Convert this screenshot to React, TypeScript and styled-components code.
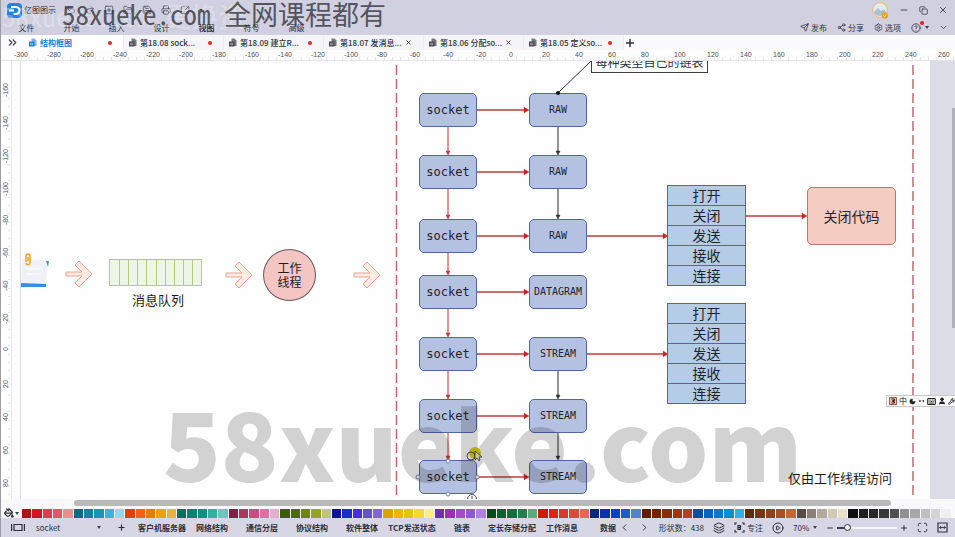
import React from "react";
import styled, { createGlobalStyle } from "styled-components";
import {
  ChevronDown, ChevronLeft, ChevronRight, ChevronsRight, CircleHelp, CirclePlay, Copy, FolderOpen, Layers,
  Maximize, Minus, PaintBucket, Plus, Redo2, Save, Send, Settings, Share2, SquareArrowOutUpRight, SquarePlus, Undo2,
  Printer, X, Moon, Keyboard, User, Wrench,
} from "lucide-react";

const cjk = '"Noto Sans CJK SC", sans-serif';
const cjkMono = '"Noto Sans Mono CJK SC", "Noto Sans CJK SC", monospace';

const Global = createGlobalStyle`
  *, *::before, *::after { box-sizing: border-box; }
  html, body, #root { height: 100%; margin: 0; }
  body { font-family: ${cjk}; color: #30303c; background: #fff; overflow: hidden; }
  button, select, input { font: inherit; color: inherit; margin: 0; }
  svg { display: block; flex: none; }
`;

const Window = styled.div`
  height: 100vh;
  display: flex;
  flex-direction: column;
  border-left: 1px solid #9c9ca4;
  position: relative;
  overflow: hidden;
`;

const Header = styled.header`
  height: 35px;
  flex: none;
  display: flex;
  justify-content: space-between;
  background: #d0d0e0;
`;

const HeaderSide = styled.div<{ $end?: boolean }>`
  display: flex;
  flex-direction: column;
  align-items: ${(p) => (p.$end ? "flex-end" : "flex-start")};
`;

const TitleRow = styled.div<{ $gap: number }>`
  height: 20px;
  display: flex;
  align-items: center;
  gap: ${(p) => p.$gap}px;
  padding: 0 7px 0 6px;
`;

const Brand = styled.span`
  display: flex;
  align-items: center;
  gap: 2px;
  width: 50px;
  font-size: 8px;
  line-height: 12px;
  white-space: nowrap;
`;

const PlainButton = styled.button`
  display: flex;
  align-items: center;
  justify-content: center;
  gap: 2px;
  padding: 0;
  border: 0;
  background: none;
  font-size: 8px;
  line-height: 12px;
  white-space: nowrap;
`;

const MenuBar = styled.nav`
  display: flex;
  padding-left: 3px;
`;

const MenuItem = styled(PlainButton)<{ $active?: boolean }>`
  width: 45px;
  height: 15px;
  font-weight: ${(p) => (p.$active ? 700 : 400)};
`;

const ActionRow = styled.div`
  height: 15px;
  display: flex;
  align-items: center;
  gap: 10px;
  padding-right: 7px;
`;

const HelpWrap = styled.span`
  display: flex;
  align-items: center;
  gap: 4px;
  position: relative;
`;

const Badge = styled.i`
  position: absolute;
  left: 9px;
  top: -2px;
  width: 4px;
  height: 4px;
  border-radius: 50%;
  background: #e02020;
`;

const TabStrip = styled.div`
  height: 15px;
  flex: none;
  display: flex;
  align-items: center;
  background: #fbfbfd;
`;

const TabLead = styled(PlainButton)`
  width: 23px;
  height: 15px;
`;

const Tab = styled.div<{ $active?: boolean }>`
  width: 100px;
  height: 15px;
  display: flex;
  align-items: center;
  gap: 3px;
  padding: 0 11px 0 5px;
  border-right: 1px solid #ececf0;
  background: ${(p) => (p.$active ? "#ffffff" : "#f5f5f8")};
  color: ${(p) => (p.$active ? "#1e7be0" : "#30303a")};
`;

const TabName = styled.button<{ $active?: boolean }>`
  flex: 1;
  min-width: 0;
  padding: 0;
  border: 0;
  background: none;
  text-align: left;
  font-size: 8px;
  font-weight: ${(p) => (p.$active ? 700 : 500)};
  line-height: 14px;
  white-space: nowrap;
`;

const Dot = styled.i`
  width: 4px;
  height: 4px;
  border-radius: 50%;
  background: #e82424;
`;

const TopRuler = styled.div`
  height: 11px;
  flex: none;
  display: flex;
  padding-left: 13px;
  overflow: hidden;
  background: #fdfdfe;
  border-bottom: 1px solid #e4e4ea;
  font: 7px/9px "Liberation Sans", sans-serif;
  color: #50505a;
`;

const TopMark = styled.span`
  width: 33px;
  flex: none;
  background: repeating-linear-gradient(90deg, transparent 0 7px, #e4e4e8 7px 8px) 0 100% / 100% 3px no-repeat;
`;

const Middle = styled.main`
  flex: 1;
  min-height: 0;
  display: flex;
`;

const SideRuler = styled.div`
  width: 11px;
  flex: none;
  padding-top: 22px;
  overflow: hidden;
  border-right: 1px solid #e8e8ec;
  font: 7px/9px "Liberation Sans", sans-serif;
  color: #50505a;
`;

const SideMark = styled.span`
  display: flex;
  justify-content: flex-end;
  height: 33px;
  writing-mode: vertical-rl;
  transform: rotate(180deg);
  background: repeating-linear-gradient(0deg, transparent 0 7px, #e4e4e8 7px 8px) 0 0 / 2px 100% no-repeat;
`;

const Stage = styled.section`
  flex: 1;
  position: relative;
  overflow: hidden;
  background: #dcdce6;
`;

const Sheet = styled.div`
  position: absolute;
  inset: 0 25px 0 0;
  background: linear-gradient(90deg, #fdfdfd 0 8px, #e0e0e4 8px 9px, #fefefe 9px);
`;

const Wires = styled.svg`
  position: absolute;
  left: 0;
  top: 0;
`;

type Box = { $x: number; $y: number };

const Placed = styled.div<Box>`
  position: absolute;
  left: ${(p) => p.$x}px;
  top: ${(p) => p.$y}px;
`;

const Node = styled(Placed)<{ $small?: boolean }>`
  width: 58px;
  height: 34px;
  display: flex;
  align-items: center;
  justify-content: center;
  border: 1px solid #53679f;
  border-radius: 5px;
  background: #b5c1e1;
  color: #20242e;
  font-family: "DejaVu Sans Mono", monospace;
  font-size: ${(p) => (p.$small ? 10 : 12)}px;
  line-height: 16px;
`;

const OpTable = styled.table<Box>`
  position: absolute;
  left: ${(p) => p.$x}px;
  top: ${(p) => p.$y}px;
  width: 79px;
  border-collapse: collapse;
  background: #b4cce6;
  color: #1c2430;
  font-size: 14px;
  line-height: 19px;
  text-align: center;

  td { height: 20px; padding: 0; border: 1px solid #2a7aa8; }
`;

const CodeBox = styled(Placed)`
  width: 89px;
  height: 58px;
  display: flex;
  align-items: center;
  justify-content: center;
  border: 1px solid #b8786a;
  border-radius: 5px;
  background: #f4ccc2;
  color: #2c2424;
  font-size: 14px;
  line-height: 18px;
`;

const Worker = styled(Placed)`
  width: 53px;
  height: 52px;
  display: flex;
  align-items: center;
  justify-content: center;
  border: 1px solid #6c5858;
  border-radius: 50%;
  background: #f3c5c3;
  color: #241c1c;
  font-size: 12px;
  line-height: 14px;
  text-align: center;
`;

const Queue = styled(Placed)`
  width: 93px;
  height: 27px;
  display: grid;
  grid-template-columns: repeat(10, 1fr);
  border: 1px solid #b4cc78;
  background: #ecf5e6;

  i + i { border-left: 1px solid #b4cc78; }
`;

const Caption = styled(Placed)`
  font-size: 13px;
  line-height: 18px;
  white-space: nowrap;
  color: #1c1c20;
`;

const Note = styled(Placed)`
  width: 117px;
  height: 22px;
  border: 1px solid #404040;
  background: #fff;
  font-size: 12px;
  line-height: 20px;
  text-align: center;
  white-space: nowrap;
`;

const BigMark = styled(Placed)`
  font-size: 95px;
  font-weight: 900;
  line-height: 100px;
  color: rgba(20, 20, 20, 0.19);
  white-space: nowrap;
  pointer-events: none;
`;

const TopMarkText = styled.div`
  position: absolute;
  left: 61px;
  top: 0;
  font-family: ${cjkMono};
  font-size: 27px;
  line-height: 28px;
  color: rgba(50, 50, 60, 0.8);
  white-space: pre;
  pointer-events: none;
`;

const GhostText = styled(TopMarkText)`
  left: 1px;
  top: 2px;
  color: rgba(255, 255, 255, 0.3);
`;

const ImeBar = styled.div`
  position: absolute;
  right: 0;
  top: 334px;
  width: 69px;
  height: 12px;
  display: flex;
  align-items: center;
  gap: 2px;
  padding-left: 2px;
  border: 1px solid #c8c8c8;
  border-right: 0;
  background: #fafafa;
  font-size: 8px;
  line-height: 10px;
  color: #202020;
`;

const VThumb = styled.div`
  position: absolute;
  right: 0;
  top: 47px;
  width: 3px;
  height: 220px;
  background: #b0b0b8;
`;

const HScroll = styled.div`
  height: 9px;
  flex: none;
  padding: 1px 64px 2px 73px;
  background: #f8f8fa;
`;

const HThumb = styled.div`
  height: 6px;
  border-radius: 3px;
  background: #b9b9b9;
`;

const Palette = styled.div`
  height: 10px;
  flex: none;
  display: flex;
  align-items: center;
  padding-right: 5px;
  background: #f8f8fa;
`;

const PaletteLead = styled(PlainButton)`
  width: 21px;
  gap: 1px;
`;

const Swatches = styled.div`
  flex: 1;
  display: flex;
  gap: 1px;
`;

const Swatch = styled.button<{ $c: string }>`
  flex: 1;
  height: 9px;
  padding: 0;
  border: 0;
  background: ${(p) => p.$c};
`;

const Status = styled.footer`
  height: 19px;
  flex: none;
  display: flex;
  align-items: center;
  padding: 0 7px 0 10px;
  background: #d6d6e4;
  font-size: 8px;
  line-height: 12px;
`;

const SelectWrap = styled.label<{ $w: number }>`
  width: ${(p) => p.$w}px;
  display: flex;
  align-items: center;
`;

const Select = styled.select<{ $indent?: boolean }>`
  flex: 1;
  min-width: 0;
  appearance: none;
  padding: 0 0 0 ${(p) => (p.$indent ? 11 : 0)}px;
  border: 0;
  background: none;
  font-size: 8px;
`;

const AddPage = styled(PlainButton)`
  width: 36px;
  padding-left: 4px;
`;

const Pages = styled.div`
  flex: 1;
  min-width: 0;
  display: flex;
  overflow: hidden;
`;

const PageTab = styled(PlainButton)`
  width: 50px;
  flex: none;
  font-weight: 700;
`;

const StatusTools = styled.div`
  display: flex;
  align-items: center;
  gap: 9px;
  padding-left: 3px;
`;

const ZoomGroup = styled.div`
  display: flex;
  align-items: center;
  gap: 3px;
`;

const Range = styled.input`
  appearance: none;
  width: 60px;
  height: 10px;
  background: linear-gradient(90deg, #40404c 0 10px, #f4f4f8 10px) 0 50% / 100% 2px no-repeat;

  &::-webkit-slider-thumb {
    appearance: none;
    width: 7px;
    height: 7px;
    border: 1px solid #30303c;
    border-radius: 50%;
    background: #fff;
  }
`;

const Caret = () => (
  <svg width="4" height="3" viewBox="0 0 4 3"><path d="M0 0h4L2 3z" fill="#40404c" /></svg>
);

const Logo = () => (
  <svg width="15" height="15" viewBox="0 0 15 15">
    <rect width="15" height="15" rx="4" fill="#1c84f0" />
    <path d="M4 4h5a3.500 3.500 0 0 1 0 7H6.500M2 7.500h5" fill="none" stroke="#fff" strokeWidth="2" />
  </svg>
);

const Avatar = () => (
  <svg width="17" height="17" viewBox="0 0 17 17">
    <circle cx="8" cy="8" r="7.400" fill="#e4ecf2" stroke="#ecb860" />
    <path d="M2 10l4-4 3 3 3-2 2 3a7 7 0 0 1-12 1z" fill="#a8c0d0" />
    <circle cx="13" cy="13.500" r="3.200" fill="#f0a020" />
    <path d="M11.500 13.300l1.200 1.200 2-2" fill="none" stroke="#fff" strokeWidth=".8" />
  </svg>
);

const DocIcon = ({ active }: { active?: boolean }) => (
  <svg width="8" height="9" viewBox="0 0 8 9">
    <path d="M2.500.5h3l2 2v5.500h-5z" fill={active ? "#7ab4f0" : "#77777d"} />
    <path d="M0 3.500h5.500v5H0z" fill={active ? "#1e7be0" : "#48484e"} />
    <path d="M1.500 5.200h2.200v1.600H1.500z" fill="none" stroke="#fff" strokeWidth=".4" />
  </svg>
);

const FocusIcon = () => (
  <svg width="11" height="11" viewBox="0 0 11 11" fill="none" stroke="#30303c" strokeWidth="1.200">
    <path d="M3 1H1v2M8 1h2v2M3 10H1V8M8 10h2V8M4 3v5M4 3.600h2.500v3.800H4M4 5.500h2.500" />
  </svg>
);

const FitIcon = () => (
  <svg width="11" height="11" viewBox="0 0 11 11" fill="none" stroke="#30303c">
    <path d="M1 1h9v9H1z" strokeWidth="1.200" />
    <path d="M2.500 5.500h6M4.200 4L2.700 5.500 4.200 7M6.800 4l1.500 1.500L6.800 7" strokeWidth=".9" />
  </svg>
);

const PanelIcon = () => (
  <svg width="14" height="9" viewBox="0 0 14 9" fill="none" stroke="#30303c" strokeWidth="1.200">
    <path d="M.6 1v7M3 1.500h8v6H3zM13.400 1v7" />
  </svg>
);

const ImeIcon = () => (
  <svg width="8" height="8" viewBox="0 0 8 8">
    <path d="M.5.500h7v7h-7z" fill="#e8c0b0" stroke="#a05848" />
    <path d="M2.500 2h3v1.500h-2v1h2V6h-3" fill="none" stroke="#402424" />
  </svg>
);

const PunctIcon = () => (
  <svg width="7" height="6" viewBox="0 0 7 6" fill="#303030">
    <circle cx="2" cy="3" r=".9" /><path d="M4.500 2h1.500v1.500l-1 1z" />
  </svg>
);

const rows = [
  { y: 32, kind: "RAW" }, { y: 94, kind: "RAW" }, { y: 158, kind: "RAW" }, { y: 214, kind: "DATAGRAM" },
  { y: 276, kind: "STREAM" }, { y: 338, kind: "STREAM" }, { y: 399, kind: "STREAM" },
];
const ops = ["打开", "关闭", "发送", "接收", "连接"];
const SX = 407;
const RX = 517;

const BlockArrow = ({ x, y }: { x: number; y: number }) => (
  <path
    d={`M${x} ${y - 2}h16l-7 -7l4 -4l13 13l-13 13l-4 -4l7 -7h-16z`}
    fill="#fdebe3" stroke="#e8a48c"
  />
);

const Down = ({ x, from, to, color }: { x: number; from: number; to: number; color: string }) => (
  <g fill={color} stroke={color}>
    <path d={`M${x} ${from}V${to - 3}`} />
    <path d={`M${x - 2} ${to - 4}h4l-2 4z`} strokeWidth=".5" />
  </g>
);

const Right = ({ y, from, to }: { y: number; from: number; to: number }) => (
  <g fill="#cc2222" stroke="#c23a3a">
    <path d={`M${from} ${y}H${to - 3}`} strokeWidth="1.300" />
    <path d={`M${to - 5} ${y - 3}l5 3l-5 3z`} strokeWidth=".3" />
  </g>
);

const Diagram = () => (
  <>
    <Note $x={579} $y={-10}>每种类型自己的链表</Note>
    {rows.map((r) => (
      <React.Fragment key={r.y}>
        <Node $x={SX} $y={r.y}>socket</Node>
        <Node $x={RX} $y={r.y} $small>{r.kind}</Node>
      </React.Fragment>
    ))}
    {[{ x: 655, y: 124 }, { x: 655, y: 242 }].map((t) => (
      <OpTable key={t.y} $x={t.x} $y={t.y}>
        <tbody>{ops.map((o) => <tr key={o}><td>{o}</td></tr>)}</tbody>
      </OpTable>
    ))}
    <CodeBox $x={795} $y={126}>关闭代码</CodeBox>
    <Worker $x={251} $y={188}>工作<br />线程</Worker>
    <Queue $x={97} $y={198}>{Array.from({ length: 10 }, (_, i) => <i key={i} />)}</Queue>
    <Caption $x={120} $y={230}>消息队列</Caption>
    <Caption $x={776} $y={408}>仅由工作线程访问</Caption>
    <Wires width="943" height="440" viewBox="0 0 943 440" fill="none">
      <g stroke="#c4686e" strokeWidth="1.500" strokeDasharray="10 4">
        <path d="M384.500 4V440" /><path d="M901 4V440" />
      </g>
      <path d="M546 32L579 0" stroke="#303030" />
      <circle cx="546" cy="32" r="2" fill="#101010" />
      {rows.map((r) => <Right key={r.y} y={r.y + 17} from={SX + 58} to={RX} />)}
      {rows.slice(1).map((r, i) => <Down key={r.y} x={436} from={rows[i].y + 34} to={r.y} color="#c83030" />)}
      {[1, 2, 5, 6].map((i) => <Down key={i} x={546} from={rows[i - 1].y + 34} to={rows[i].y} color="#2c2c34" />)}
      <Right y={175} from={575} to={656} />
      <Right y={293} from={575} to={656} />
      <Right y={155} from={734} to={795} />
      <BlockArrow x={54} y={213} />
      <BlockArrow x={214} y={214} />
      <BlockArrow x={342} y={214} />
      <path d="M10 198l26 1l-2 26H9z" fill="#eef1f6" />
      <path d="M9 222l25 1v3H9z" fill="#3c8ce0" />
      <path d="M34 200h3l-1 6z" fill="#4890a8" />
      <path d="M14 208h16M14 213h14" stroke="#fff" />
      <path d="M14 201v-6a2 2 0 0 1 4 0v6a2 2 0 0 1-4 1M16 196v4" stroke="#f0a020" strokeWidth="1.500" />
      <g fill="#fff" stroke="#7884a8">
        <circle cx="436" cy="400" r="2" /><circle cx="406" cy="416" r="2" />
        <circle cx="465" cy="416" r="2" /><circle cx="436" cy="433" r="2" />
      </g>
      <circle cx="460" cy="438" r="4.500" stroke="#50505a" /><path d="M460 435v4" stroke="#50505a" />
      <circle cx="463" cy="392" r="6" fill="#dcd400" />
      <circle cx="459" cy="395" r="4" stroke="#505048" />
      <path d="M463 390v9l2-2l2 3l1-1l-1-3h3z" fill="#fff" fillOpacity=".7" stroke="#303030" strokeWidth=".8" />
    </Wires>
    <BigMark $x={151} $y={330}>58xueke.com</BigMark>
  </>
);

const palette = (
  "b01217 d0142a e03c4c e35663 ee8a90 0f6880 1483a0 1595ba 3cb4d6 8fd8ee e04000 ee6316 e87a00 f0a008 f0b040 " +
  "047060 048474 049484 30b0a4 68c8c0 8a1c48 b03460 c84c80 e070a4 e0b0cc 3c5c00 4c6c00 6c8800 94a424 bcc878 " +
  "0c14a0 1c2cc8 4830e0 6450d0 8068d0 e0a000 ecb808 dcc80c f0dc30 faf080 7030b0 9830b8 a848c8 9058cc b080dc " +
  "004c18 04642c 10703c 20804c 60a880 cc1c00 e02408 d43830 d84c40 e06858 0c2488 0830b0 0440d0 2458cc 5880c8 " +
  "601c00 782000 8c2c04 a43400 b84018 0050ac 0064c0 0878d0 0090d0 30b0dc 582c10 703818 884420 a85020 c86430 " +
  "584c44 888074 b4a89c d4c8b4 e8e0c8 101010 202020 282828 383838 505050 909090 a8a8a8 c0c0c0 d4d4d4 f0f0f0"
).split(" ");

const tabs = [
  { name: "结构框图", active: true, dirty: true },
  { name: "第18.08 sock...", dirty: true },
  { name: "第18.09 建立R...", dirty: true },
  { name: "第18.07 发消息..." },
  { name: "第18.06 分配so..." },
  { name: "第18.05 定义so...", dirty: true },
];
const menus = ["文件", "开始", "插入", "设计", "视图", "符号", "高级"];
const pages = ["客户机服务器", "网络结构", "通信分层", "协议结构", "软件整体", "TCP发送状态", "链表", "定长存储分配", "工作消息", "数据包"];
const quick = [Undo2, Redo2, SquarePlus, FolderOpen, Save, Printer, SquareArrowOutUpRight];

export default function App() {
  return (
    <Window>
      <Global />
      <Header>
        <HeaderSide>
          <TitleRow $gap={9}>
            <Brand><Logo />亿图图示</Brand>
            {quick.map((Icon, i) => (
              <PlainButton key={i} aria-label={`快捷 ${i + 1}`}><Icon size={10} strokeWidth={1.5} /></PlainButton>
            ))}
            <Caret />
          </TitleRow>
          <MenuBar>{menus.map((m) => <MenuItem key={m} $active={m === "视图"}>{m}</MenuItem>)}</MenuBar>
        </HeaderSide>
        <HeaderSide $end>
          <TitleRow $gap={10}>
            <Avatar />
            <PlainButton aria-label="最小化"><Minus size={10} /></PlainButton>
            <PlainButton aria-label="还原"><Copy size={9} /></PlainButton>
            <PlainButton aria-label="关闭"><X size={10} /></PlainButton>
          </TitleRow>
          <ActionRow>
            <PlainButton><Send size={9} />发布</PlainButton>
            <PlainButton><Share2 size={9} />分享</PlainButton>
            <PlainButton><Settings size={9} />选项</PlainButton>
            <HelpWrap><PlainButton aria-label="帮助"><CircleHelp size={10} /></PlainButton><Badge /><Caret /></HelpWrap>
            <PlainButton aria-label="收起"><ChevronDown size={9} /></PlainButton>
          </ActionRow>
        </HeaderSide>
      </Header>
      <GhostText>58xueke.com 更换资</GhostText>
      <TopMarkText>58xueke.com 全网课程都有</TopMarkText>
      <TabStrip>
        <TabLead aria-label="展开"><ChevronsRight size={13} /></TabLead>
        {tabs.map((t) => (
          <Tab key={t.name} $active={t.active}>
            <DocIcon active={t.active} />
            <TabName $active={t.active}>{t.name}</TabName>
            {t.dirty ? <Dot /> : <PlainButton aria-label="关闭标签"><X size={7} strokeWidth={3} /></PlainButton>}
          </Tab>
        ))}
        <PlainButton aria-label="新建"><Plus size={12} strokeWidth={3} /></PlainButton>
      </TabStrip>
      <TopRuler>{Array.from({ length: 29 }, (_, i) => <TopMark key={i}>{i * 20 - 300}</TopMark>)}</TopRuler>
      <Middle>
        <SideRuler>{Array.from({ length: 13 }, (_, i) => <SideMark key={i}>{i * 20 - 160}</SideMark>)}</SideRuler>
        <Stage>
          <Sheet />
          <Diagram />
          <VThumb />
          <ImeBar>
            <ImeIcon />中<Moon size={7} fill="#202020" /><PunctIcon /><Keyboard size={9} strokeWidth={3} />
            <User size={8} fill="#202020" strokeWidth={3} /><Wrench size={7} strokeWidth={3} />
          </ImeBar>
        </Stage>
      </Middle>
      <HScroll><HThumb /></HScroll>
      <Palette>
        <PaletteLead aria-label="填充"><PaintBucket size={10} strokeWidth={3} /><Caret /></PaletteLead>
        <Swatches>{palette.map((c) => <Swatch key={c} $c={`#${c}`} aria-label={`#${c}`} />)}</Swatches>
      </Palette>
      <Status>
        <SelectWrap $w={90}>
          <PanelIcon />
          <Select $indent aria-label="页面"><option>socket</option></Select>
          <Caret />
        </SelectWrap>
        <AddPage aria-label="添加页"><Plus size={9} strokeWidth={3} /></AddPage>
        <Pages>{pages.map((p) => <PageTab key={p}>{p}</PageTab>)}</Pages>
        <StatusTools>
          <PlainButton aria-label="上一页"><ChevronLeft size={11} /></PlainButton>
          <PlainButton aria-label="下一页"><ChevronRight size={11} /></PlainButton>
          <span>形状数：438</span>
          <PlainButton aria-label="图层"><Layers size={12} /></PlainButton>
          <PlainButton><FocusIcon />专注</PlainButton>
          <PlainButton aria-label="播放"><CirclePlay size={12} /></PlainButton>
          <SelectWrap $w={24}><Select aria-label="缩放"><option>70%</option></Select><Caret /></SelectWrap>
          <ZoomGroup>
            <PlainButton aria-label="缩小"><Minus size={8} strokeWidth={3} /></PlainButton>
            <Range type="range" aria-label="缩放比例" min={0} max={100} defaultValue={14} />
            <PlainButton aria-label="放大"><Plus size={8} strokeWidth={3} /></PlainButton>
          </ZoomGroup>
          <PlainButton aria-label="全屏"><Maximize size={11} /></PlainButton>
          <PlainButton aria-label="适应宽度"><FitIcon /></PlainButton>
        </StatusTools>
      </Status>
    </Window>
  );
}
